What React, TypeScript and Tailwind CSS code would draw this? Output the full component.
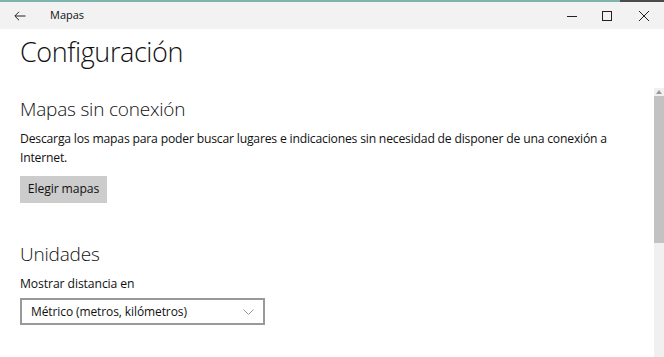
import { useState } from "react";

const font = { fontFamily: '"Segoe UI", "Open Sans", "Noto Sans", sans-serif' };

function TitleBar() {
  return (
    <div className="flex h-[27px] items-center bg-[#f2f2f2] text-[#111]">
      <button type="button" className="flex h-full w-[40px] items-center justify-center">
        <svg width="12" height="10" viewBox="0 0 12 10" fill="none" stroke="#222" strokeWidth="1">
          <path d="M11.5 5H1M5 0.8L0.8 5 5 9.2" />
        </svg>
      </button>
      <span className="ml-[10px] text-[11px]">Mapas</span>
      <div className="ml-auto flex h-full">
        <button type="button" className="flex w-[35px] items-center justify-center">
          <svg width="10" height="10" viewBox="0 0 10 10" stroke="#222" strokeWidth="1">
            <path d="M0 5.5H10" />
          </svg>
        </button>
        <button type="button" className="flex w-[35px] items-center justify-center">
          <svg width="10" height="10" viewBox="0 0 10 10" fill="none" stroke="#222" strokeWidth="1">
            <rect x="0.5" y="0.5" width="9" height="9" />
          </svg>
        </button>
        <button type="button" className="flex w-[40px] items-center justify-center">
          <svg width="10" height="10" viewBox="0 0 10 10" stroke="#222" strokeWidth="1">
            <path d="M0 0L10 10M10 0L0 10" />
          </svg>
        </button>
      </div>
    </div>
  );
}

export default function App() {
  const [unidad] = useState("Métrico (metros, kilómetros)");

  return (
    <div className="relative h-[357px] w-[664px] overflow-hidden bg-white" style={font}>
      <div className="flex h-[2px]">
        <div className="w-[620px] bg-[#7fb3ad]" />
        <div className="flex-1 bg-[#4b4b4b]" />
      </div>
      <TitleBar />

      <div className="flex">
        <main className="flex-1 pl-[20px] text-[#111]">
          <h1 className="mt-[3px] text-[27px] font-light leading-[40px] tracking-[-0.4px]">Configuración</h1>

          <h2 className="mt-[23px] text-[19px] font-light leading-[28px] tracking-[-0.2px]">Mapas sin conexión</h2>
          <p className="mt-[6px] w-[615px] text-[12.2px] leading-[19px] tracking-[-0.2px]">
            Descarga los mapas para poder buscar lugares e indicaciones sin necesidad de disponer de una conexión a Internet.
          </p>
          <button type="button" className="mt-[9px] h-[27px] w-[87px] bg-[#cccccc] text-[12.2px] tracking-[-0.1px]">
            Elegir mapas
          </button>

          <h2 className="mt-[37px] text-[19px] font-light leading-[28px] tracking-[-0.2px]">Unidades</h2>
          <p className="mt-[6px] text-[12.2px] leading-[19px] tracking-[-0.1px]">Mostrar distancia en</p>
          <div className="mt-[5px] flex h-[27px] w-[245px] items-center border-2 border-[#999] bg-white pl-[9px] pr-[9px] text-[12px] tracking-[-0.1px]">
            <span>{unidad}</span>
            <svg className="ml-auto" width="11" height="6" viewBox="0 0 11 6" fill="none" stroke="#999" strokeWidth="1">
              <path d="M0.5 0.5L5.5 5.5 10.5 0.5" />
            </svg>
          </div>
        </main>

        <aside className="mt-[59px] flex h-[270px] w-[10px] flex-col bg-[#f0f0f0]">
          <div className="flex h-[8px] items-center justify-center bg-[#f0f0f0]">
            <svg width="6" height="4" viewBox="0 0 6 4" fill="#999">
              <path d="M0 4L3 0 6 4Z" />
            </svg>
          </div>
          <div className="h-[147px] bg-[#c2c2c2]" />
        </aside>
      </div>
    </div>
  );
}
